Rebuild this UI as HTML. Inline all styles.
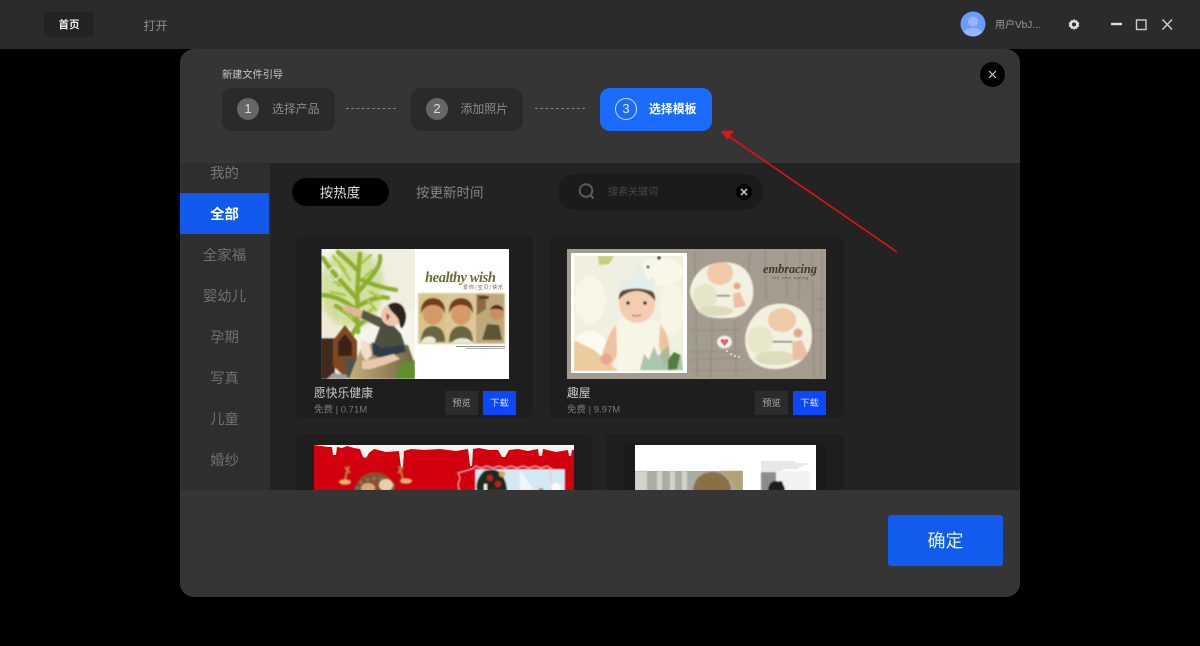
<!DOCTYPE html>
<html lang="zh"><head><meta charset="utf-8"><title>新建文件引导</title>
<style>
html,body{margin:0;padding:0;background:#000;width:1200px;height:646px;overflow:hidden}
body{position:relative;font-family:"Liberation Sans","Noto Sans CJK SC",sans-serif}
#w{position:absolute;left:0;top:0;width:1200px;height:646px;overflow:hidden;filter:blur(.35px)}
.a{position:absolute;box-sizing:border-box}
.t{position:absolute;white-space:nowrap;line-height:1;transform:translateY(-50%)}
.c{transform:translate(-50%,-50%)}
.step{position:absolute;top:88px;width:112px;height:43px;border-radius:10px;background:#2a2a2a}
.num{position:absolute;top:98px;width:22px;height:22px;border-radius:50%;background:#666;color:#ddd;font-size:13px;line-height:22px;text-align:center}
.dash{position:absolute;top:108px;width:50px;height:0;border-top:1px dashed #808080}
.side{color:#6f6f6f;font-size:14.4px;left:224.500px}
.btn{position:absolute;top:391px;width:33px;height:24px;font-size:9.300px;line-height:24px;text-align:center}
.pv{background:#2b2b2b;color:#aaa}.dl{background:#0a47ff;color:#d5e0ff}
</style></head><body><div id="w">
<div class="a" style="left:0;top:0;width:1200px;height:49px;background:#2b2b2b"></div>
<div class="a" style="left:44px;top:12px;width:50px;height:25px;background:#232323;border-radius:3px"></div>
<div class="t c" style="left:69px;top:25px;font-size:10.5px;font-weight:700;color:#eee">首页</div>
<div class="t c" style="left:155.5px;top:25.5px;font-size:12px;color:#8c8c8c">打开</div>

<svg class="a" style="left:960px;top:11px" width="27" height="27" viewBox="0 0 27 27"><defs><clipPath id="av"><circle cx="13" cy="13" r="12.500"/></clipPath></defs><circle cx="13" cy="13" r="12.500" fill="#6b9bff"/><g clip-path="url(#av)" fill="#94b6ff"><circle cx="13" cy="10.500" r="5"/><path d="M3 26c0-7 4-9 10-9s10 2 10 9z"/></g></svg>
<div class="t" style="left:995px;top:25.500px;font-size:10px;color:#999">用户VbJ...</div>
<svg class="a" style="left:1068px;top:18px" width="12" height="13" viewBox="0 0 12 13"><path d="M6 .8l1 1.6 1.900-.3.700 1.700 1.700.9-.5 1.800.5 1.800-1.700.9-.7 1.700-1.900-.3-1 1.600-1-1.600-1.900.3-.7-1.700L.7 8.300l.5-1.800-.5-1.800 1.700-.9.700-1.700L5 2.400z" fill="#ddd"/><circle cx="6" cy="6.500" r="2" fill="#2b2b2b"/></svg>
<svg class="a" style="left:1105px;top:14px" width="70" height="22" viewBox="0 0 70 22"><path d="M6 10h11" stroke="#ddd" stroke-width="2.400"/><rect x="31.500" y="6" width="9.500" height="9.500" fill="none" stroke="#ccc" stroke-width="1.400"/><path d="M57.500 5.500l9.500 10M67 5.500l-9.500 10" stroke="#ccc" stroke-width="1.500"/></svg>

<div class="a" style="left:180px;top:49px;width:840px;height:548px;background:#353535;border-radius:14px;overflow:hidden">
  <div class="a" style="left:0;top:114px;width:90px;height:327px;background:#2e2e2e"></div>
  <div class="a" style="left:90px;top:114px;width:750px;height:327px;background:#232323"></div>
</div>

<div class="t" style="left:222px;top:76px;font-size:10.200px;color:#c8c8c8">新建文件引导</div>
<div class="step" style="left:222px;width:113px"></div>
<div class="num" style="left:237px">1</div>
<div class="t" style="left:272px;top:109.500px;font-size:11.900px;color:#8b8b8b">选择产品</div>
<div class="dash" style="left:346px"></div>
<div class="step" style="left:411px"></div>
<div class="num" style="left:426px">2</div>
<div class="t" style="left:460.500px;top:109.500px;font-size:11.900px;color:#8b8b8b">添加照片</div>
<div class="dash" style="left:535px"></div>
<div class="step" style="left:600px;background:#1c6bff"></div>
<div class="num" style="left:615px;background:none;border:1px solid #cfe0ff;box-sizing:border-box;line-height:20px;color:#dfe9ff">3</div>
<div class="t" style="left:649px;top:109.500px;font-size:11.900px;font-weight:700;color:#fff">选择模板</div>

<svg class="a" style="left:979px;top:61px" width="27" height="27" viewBox="0 0 27 27"><circle cx="13.500" cy="13.500" r="12.500" fill="#000"/><path d="M10 10l7 7M17 10l-7 7" stroke="#ccc" stroke-width="1.200"/></svg>

<div class="a" style="left:180px;top:193px;width:89px;height:41px;background:#1259ee"></div>
<div class="t c side" style="top:174px;color:#777">我的</div>
<div class="t c side" style="top:215px;color:#fff;font-weight:700">全部</div>
<div class="t c side" style="top:255.500px">全家福</div>
<div class="t c side" style="top:296.500px">婴幼儿</div>
<div class="t c side" style="top:337.500px">孕期</div>
<div class="t c side" style="top:378.500px">写真</div>
<div class="t c side" style="top:419.500px">儿童</div>
<div class="t c side" style="top:460.500px">婚纱</div>

<div class="a" style="left:292px;top:178px;width:97px;height:28px;border-radius:14px;background:#000"></div>
<div class="t c" style="left:340px;top:192.500px;font-size:13.500px;color:#ddd">按热度</div>
<div class="t" style="left:416px;top:192.500px;font-size:13.500px;color:#858585">按更新时间</div>
<div class="a" style="left:558px;top:174px;width:205px;height:36px;border-radius:18px;background:#1b1b1b"></div>
<svg class="a" style="left:577px;top:182px" width="20" height="20" viewBox="0 0 20 20"><circle cx="9" cy="8.500" r="6.300" fill="none" stroke="#5a5a5a" stroke-width="2"/><path d="M13.500 13.300l3 3" stroke="#5a5a5a" stroke-width="2.200"/></svg>
<div class="t" style="left:608px;top:193px;font-size:10px;color:#484848">搜索关键词</div>
<svg class="a" style="left:736px;top:184px" width="16" height="16" viewBox="0 0 16 16"><circle cx="8" cy="8" r="8" fill="#000"/><path d="M5 5l6 6M11 5l-6 6" stroke="#ccc" stroke-width="1.500"/></svg>

<!-- cards -->
<div class="a" style="left:296px;top:237px;width:237px;height:181px;background:#1e1e1e;border-radius:5px"></div>
<div class="a" style="left:549px;top:237px;width:295px;height:181px;background:#1e1e1e;border-radius:5px"></div>
<div class="a" style="left:296px;top:434px;width:296px;height:57px;background:#1e1e1e;border-radius:5px 5px 0 0"></div>
<div class="a" style="left:606px;top:434px;width:238px;height:57px;background:#1e1e1e;border-radius:5px 5px 0 0"></div>
<div class="a" style="left:624px;top:445px;width:202px;height:46px;background:#1a1a1a"></div>

<svg class="a" style="left:0;top:0" width="1200" height="646" viewBox="0 0 1200 646">
<defs>
<filter id="b1" x="-10%" y="-10%" width="120%" height="120%"><feGaussianBlur stdDeviation=".9"/></filter>
<filter id="b3" x="-20%" y="-20%" width="140%" height="140%"><feGaussianBlur stdDeviation="3"/></filter>
<clipPath id="p1"><rect x="321.500" y="249" width="93.500" height="130"/></clipPath>
<clipPath id="p2"><rect x="574" y="256" width="109" height="115"/></clipPath>
<clipPath id="p3"><rect x="314" y="445" width="260" height="46"/></clipPath>
<clipPath id="p4"><rect x="635" y="445" width="181" height="46"/></clipPath>
<clipPath id="cA"><path d="M690 289c3-14 12-22 22-25 14-4 30-1 36 9 6 9 7 22 3 31-5 9-12 14-22 14-12 1-28 0-33-10-3-7-7-11-6-19z"/></clipPath>
<clipPath id="cB"><path d="M745 340c0-14 10-29 22-34 14-5 30-2 38 8 9 11 9 30 2 40-6 9-15 14-28 15-13 1-23-3-29-11-3-6-5-12-5-18z"/></clipPath>
<linearGradient id="tan" x1="0" x2="1"><stop offset="0" stop-color="#c5ae7d"/><stop offset="1" stop-color="#6f6443"/></linearGradient>
</defs>

<!-- image 1 left -->
<g clip-path="url(#p1)">
<rect x="321" y="249" width="94" height="130" fill="#f5f4ea"/>
<g filter="url(#b1)">
<path d="M372 249h43v60l-28 8z" fill="#f0efdf"/>
<rect x="321" y="304" width="18" height="70" fill="#f2ead8"/>
<ellipse cx="352" cy="288" rx="32" ry="40" fill="#bcd06e" opacity=".6" filter="url(#b3)"/>
<g fill="none" stroke="#8cb02e" stroke-width="4.500" stroke-linecap="round">
<path d="M358 332C356 300 358 275 360 254"/><path d="M358 300C345 285 332 273 323 258"/><path d="M358 292C372 276 382 266 380 256"/>
<path d="M356 310C345 300 333 296 323 295"/><path d="M360 305C372 298 382 296 388 298"/><path d="M357 270C350 262 345 258 338 252"/>
<path d="M362 280C372 284 382 288 396 290"/><path d="M357 322C349 314 342 309 336 306"/><path d="M352 335C356 326 364 320 372 318"/>
</g>
<g fill="none" stroke="#a9ca42" stroke-width="2.600" stroke-linecap="round">
<path d="M350 280l-10-15M362 263l9-8M345 295l-14-3M370 292l10 5M352 318l-8-8M364 315l10-7M328 276l12 10M372 270l-8 8M345 270l-12-14M368 300l8 10"/>
</g>
<circle cx="334" cy="274" r="6" fill="none" stroke="#e8eed8" stroke-width="1.400"/>
<rect x="321" y="338" width="14" height="41" fill="#3c2a1a"/>
<path d="M333 340l12-15 12 16v31l-11 6-13-12z" fill="#7e4a20"/>
<path d="M338 342l7-8 7 9v13h-14z" fill="#3a2312"/>
<path d="M344 358h13v20h-10z" fill="#4d5344"/>
<path d="M349 379l14-36 20 2 25 0 7 20v14z" fill="url(#tan)"/>
<path d="M347 305l14 5 10 5 10 4-2 7-14-5-11-6-12-6z" fill="#e4b59a"/>
<path d="M363 310l16 7 8 3-6 8-20-10z" fill="#555747"/>
<path d="M382 322l10 2 9 10 6 18-30 5-5-8z" fill="#4d4f40"/>
<path d="M372 342l9 6 22-3 2 6-20 8-12-4z" fill="#2f3b4a"/>
<path d="M361 340l8 3 3 12-6 6-5-8z" fill="#f0dfc9"/>
<path d="M362 361l12-2 20-5 6 5-16 6-13 4-9 0z" fill="#e9c8ac"/>
<circle cx="392" cy="315" r="11" fill="#ecc7ab"/>
<path d="M388 305c7-5 15-2 17 6 2 6 0 14-3 17-3-1-2-8-5-11-3-4-7-6-9-12z" fill="#2e241e"/>
<path d="M386 313l4 3-3 5z" fill="#b43a32"/>
<path d="M396 379l2-10 6-10 4 4 7-3v19z" fill="#5f8f2e"/>
<path d="M327 379l6-6 14 2v4z" fill="#9da19a"/>
</g></g>
<!-- image 1 right -->
<rect x="415" y="249" width="94" height="130" fill="#fff"/>
<text x="425" y="282" font-family="Liberation Serif,serif" font-style="italic" font-weight="700" font-size="14.500" fill="#6c6a36" textLength="71" filter="url(#b1)" style="filter:none">healthy wish</text>
<text x="463" y="289" font-family="Noto Sans CJK SC,sans-serif" font-size="5" fill="#7a5038" textLength="40">爱你/宝贝/快乐</text>
<g filter="url(#b1)">
<rect x="418" y="293" width="87" height="51" fill="#dcc99a"/>
<rect x="419" y="294" width="27" height="49" fill="#d8c48a"/><rect x="447" y="294" width="27" height="49" fill="#dbc895"/><rect x="476" y="294" width="28" height="49" fill="#bfa77a"/>
<ellipse cx="433" cy="314" rx="10" ry="11" fill="#d69a68"/><path d="M421 314c-1-12 6-16 12-16s13 4 12 16c-2-6-6-9-12-9s-10 3-12 9z" fill="#6e3f1e"/>
<path d="M421 342c0-11 5-16 12-16s12 5 12 16z" fill="#6b6642"/>
<ellipse cx="461" cy="314" rx="10" ry="11" fill="#d69a68"/><path d="M449 314c-1-12 6-16 12-16s13 4 12 16c-2-6-6-9-12-9s-10 3-12 9z" fill="#6e3f1e"/>
<path d="M449 342c0-11 5-16 12-16s12 5 12 16z" fill="#6b6642"/>
<path d="M421 343c2-8 12-8 15-3l-2 3zM452 343c3-6 16-7 21 0z" fill="#e9ecd4"/>
<circle cx="497" cy="313" r="7" fill="#c98f63"/><path d="M490 310c2-7 12-7 14 1-4-2-9-3-14-1z" fill="#4f3018"/>
<path d="M482 340l5-16 12 1 3 15z" fill="#5b5538"/>
<path d="M477 295h9v14l-9 6z" fill="#8b6a42"/>
<rect x="479" y="296" width="10" height="3" fill="#5a3a1a"/>
</g>
<rect x="456" y="346" width="49" height="1" fill="#888"/><rect x="466" y="348" width="39" height="1" fill="#aaa"/>

<!-- image 2 -->
<rect x="567" y="249" width="259" height="130" fill="#a49c8e"/>
<g stroke="#6f6a60" stroke-width=".6" fill="none" opacity=".6" filter="url(#b1)">
<path d="M695 252l2 125M712 320l-1 58M735 320l1 57M750 252l-2 20M765 250l1 50M786 252l1 46M800 250l-1 50M812 252l2 128M822 250l-1 130M690 352h50M690 360l50-2M690 370h60M812 300l14-2M812 310h14M812 330l14 1M690 330h50"/>
</g>
<rect x="571" y="253" width="116" height="120" fill="#fff"/>
<g clip-path="url(#p2)">
<rect x="574" y="256" width="109" height="115" fill="#f0f0e0"/>
<g filter="url(#b1)">
<path d="M598 256h16l-5 8-10 1z" fill="#c8cf78"/>
<path d="M575 295l9-17 6 0-8 18-6 12z" fill="#8fae6a"/>
<ellipse cx="590" cy="300" rx="16" ry="24" fill="#f8f6e6"/>
<ellipse cx="590" cy="348" rx="18" ry="17" fill="#fbfaf0"/>
<ellipse cx="660" cy="272" rx="24" ry="14" fill="#f9f7e8"/><circle cx="659" cy="258" r="1.800" fill="#333"/><circle cx="648" cy="267" r="1.500" fill="#333"/>
<ellipse cx="672" cy="310" rx="12" ry="26" fill="#f8f5e6"/>
<path d="M574 340l20 10 24 21h-44z" fill="#eccba0"/>
<path d="M617 322c8-6 14-6 20-3 7 3 15 0 23 3l3 46-46 3z" fill="#f7f5e6"/>
<path d="M616 325c-5 5-12 20-14 32l7 12 8-14zM660 325c6 5 10 16 10 32l-6 10-5-22z" fill="#edc3a2"/>
<circle cx="606" cy="359" r="5.500" fill="#e6a98e"/>
<ellipse cx="637" cy="303" rx="18" ry="20" fill="#f4cdb1"/>
<path d="M619 300c-1-9 7-15 18-15s19 6 18 16c-4-6-10-10-18-10s-15 4-18 9z" fill="#5e4630"/>
<path d="M617 293l5-16 8 4 10-20 8 19 6-3 2 16c-12-6-28-6-39 0z" fill="#e4efe9"/>
<circle cx="628" cy="303" r="1.800" fill="#2b211d"/><circle cx="645" cy="303" r="1.800" fill="#2b211d"/><path d="M632 315q5 2 9 0" stroke="#c4695a" stroke-width="1.300" fill="none"/>
<path d="M640 370l4-16 5 6 5-14 4 10 10-10 2 10 11-2 2 16z" fill="#8fb79a" opacity=".75"/>
<path d="M668 360l6-8 6 3-3 14-9 1z" fill="#4f7f3a"/>
</g></g>
<g filter="url(#b1)">
<path d="M690 289c3-14 12-22 22-25 14-4 30-1 36 9 6 9 7 22 3 31-5 9-12 14-22 14-12 1-28 0-33-10-3-7-7-11-6-19z" fill="#f2f0df"/>
<path d="M745 340c0-14 10-29 22-34 14-5 30-2 38 8 9 11 9 30 2 40-6 9-15 14-28 15-13 1-23-3-29-11-3-6-5-12-5-18z" fill="#f2f0df"/>
<g clip-path="url(#cA)"><ellipse cx="720" cy="273" rx="13" ry="12" fill="#efc9a8"/><rect x="712" y="295" width="18" height="1.500" fill="#666"/><ellipse cx="705" cy="297" rx="12" ry="13" fill="#e5e5c8"/><ellipse cx="715" cy="311" rx="18" ry="5" fill="#dedcbe"/><circle cx="737" cy="286" r="3.500" fill="#dfa98c"/><path d="M733 294l7-2 6 14-12 2z" fill="#ecbfa4"/></g>
<g clip-path="url(#cB)"><ellipse cx="782" cy="320" rx="14" ry="12" fill="#efc9a8"/><rect x="770" y="341" width="22" height="1.500" fill="#666"/><ellipse cx="760" cy="340" rx="13" ry="14" fill="#e7e7ca"/><ellipse cx="775" cy="358" rx="20" ry="7" fill="#dedcbe"/><circle cx="798" cy="333" r="4.500" fill="#dfa98c"/><path d="M792 342l10-2 7 18-16 3z" fill="#ecbfa4"/></g>
<ellipse cx="724.500" cy="342" rx="7.500" ry="6.500" fill="#f2efe2"/>
</g>
<path d="M724.500 346l-3.500-4c-1.500-2 1.500-4 3.500-2 2-2 5 0 3.500 2z" fill="#e8608a"/>
<circle cx="727" cy="351" r="1" fill="#e8e4d8"/><circle cx="731" cy="354" r="1" fill="#e8e4d8"/><circle cx="735" cy="356" r="1" fill="#e8e4d8"/><circle cx="739" cy="357" r="1" fill="#e8e4d8"/>
<text x="763" y="273" font-family="Liberation Serif,serif" font-style="italic" font-weight="700" font-size="12.500" fill="#3c3a36" textLength="54">embracing</text>
<text x="772" y="279" font-family="Liberation Sans,sans-serif" font-size="3.500" fill="#4c4a44" textLength="36">full love spring</text>

<!-- image 3 -->
<g clip-path="url(#p3)">
<rect x="314" y="445" width="260" height="46" fill="#d2000f"/>
<path d="M314 445h260v5l-2 0-1 6-2 0-1-6-12 2-13-3-1 7h-3l-1-7-10 2-10-2-9 1-4 7h-3l-4-7-9 0-10-2-6 1-1 17-2 0-2-17-12 2-16-2-16 1-13-1-7 2-1 16-2 1-2-17-13 1-12-3-5 4-3 5-3-1-3-8-6-1-7-2-5 2-5-1-1 8-3 0-1-8-4 0z" fill="#f6f3f0"/>
<g filter="url(#b1)">
<path d="M345 482c0-6 2-10 4-16M350 473l-5-6M403 482c0-6-2-10-4-16M398 473l5-6" fill="none" stroke="#b77b3a" stroke-width="2.200"/>
<ellipse cx="345" cy="482" rx="6" ry="2.800" fill="#e3b26a"/><ellipse cx="406" cy="481" rx="6" ry="2.800" fill="#e3b26a"/>
<circle cx="375" cy="492" r="20" fill="#8e4e2a"/>
<path d="M356 489c3-14 36-14 40 0" fill="none" stroke="#3e8f72" stroke-width="2.500" stroke-dasharray="3 4"/>
<ellipse cx="368" cy="488" rx="7" ry="5" fill="#d9a878"/><ellipse cx="386" cy="485" rx="7" ry="6" fill="#e9cfae"/>
<rect x="475" y="469" width="90" height="26" fill="#d2e8f2"/>
<path d="M472 469l4-3 5 2 6-2 6 2 6-2 6 2 6-2 6 2 6-2 6 2 6-2 6 2 6-2 5 3-2 6 2 8-2 7v3h-90l-2-8 2-7-2-5z" fill="none" stroke="#f5c4c8" stroke-width="1.200"/>
<path d="M477 491c-2-8 2-15 7-20 6-2 13-2 16 2 5 5 7 12 7 18z" fill="#1d2a1f"/>
<circle cx="502" cy="474" r="3" fill="#d9a14a"/><circle cx="490" cy="478" r="3" fill="#c41e24"/><circle cx="498" cy="484" r="3" fill="#c41e24"/><rect x="484" y="484" width="3" height="7" fill="#eee"/>
<path d="M520 470l14 20h-14z" fill="#eef7fb"/><ellipse cx="556" cy="487" rx="5" ry="4" fill="#fafafa"/><circle cx="541" cy="491" r="3" fill="#e66"/>
</g></g>

<!-- image 4 -->
<g clip-path="url(#p4)">
<rect x="635" y="445" width="181" height="46" fill="#fff"/>
<rect x="635" y="471" width="108" height="20" fill="#a9aea5"/>
<g filter="url(#b1)">
<path d="M635 471h12v20h-12zM657 471h5v20h-5zM670 471h5v20h-5zM682 471h5v20h-5z" fill="#d0d4cb"/>
<path d="M693 491c1-12 8-19 20-19 10 0 18 8 18 19z" fill="#8a6f45"/>
<path d="M720 471h22v20h-6c-2-8-8-15-16-20z" fill="#b3a372"/>
<rect x="761" y="471" width="49" height="20" fill="#f2f2f0"/>
<rect x="761" y="472" width="15" height="19" fill="#8b8e88"/>
<path d="M768 491c0-6 3-10 7-10s10 2 10 10z" fill="#1f1a1a"/>
<circle cx="780" cy="484" r="3" fill="#1f1a1a"/>
</g>
<g stroke="#c4c4c4" stroke-width=".7">
<path d="M761 462h34M761 464h46M761 466h42M761 468h38M761 470h22"/>
</g>
</g>

<!-- arrow -->
<path d="M897 252L727 135" stroke="#e8101c" stroke-width="1.600"/>
<path d="M721 131l13-.5-6.500 9.500z" fill="#e8101c"/>
</svg>

<div class="t" style="left:314px;top:393.500px;font-size:11.800px;color:#c9c9c9">愿快乐健康</div>
<div class="t" style="left:314px;top:409.500px;font-size:9.500px;color:#767676">免费 | 0.71M</div>
<div class="btn pv" style="left:445px">预览</div><div class="btn dl" style="left:483px">下载</div>
<div class="t" style="left:567px;top:393.500px;font-size:11.800px;color:#c9c9c9">趣屋</div>
<div class="t" style="left:567px;top:409.500px;font-size:9.500px;color:#767676">免费 | 9.97M</div>
<div class="btn pv" style="left:755px">预览</div><div class="btn dl" style="left:793px">下载</div>

<div class="a" style="left:180px;top:490px;width:840px;height:107px;background:#353535;border-radius:0 0 14px 14px"></div>
<div class="a" style="left:888px;top:515px;width:115px;height:51px;background:#125ced;border-radius:3px;color:#e6eefc;font-size:18px;line-height:53px;text-align:center">确定</div>
</div></body></html>
